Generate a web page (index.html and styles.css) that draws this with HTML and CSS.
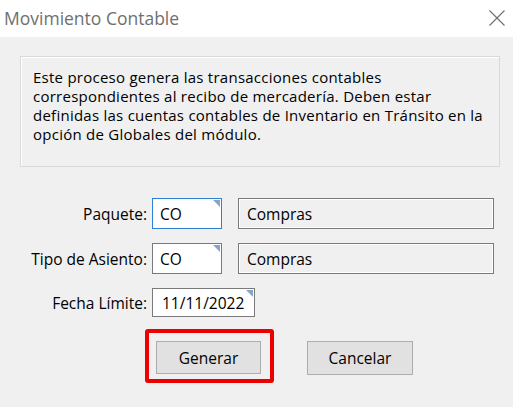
FILE: index.html
```html
<!DOCTYPE html>
<html lang="es">
<head>
<meta charset="utf-8">
<title>Movimiento Contable</title>
<link rel="stylesheet" href="styles.css">
</head>
<body>
<div class="window">
  <div class="titlebar">
    <span class="title">Movimiento Contable</span>
    <svg class="close" width="16" height="16" viewBox="0 0 16 16"><path d="M0.5 0.5 L15.5 15.5 M15.5 0.5 L0.5 15.5" stroke="#6e6e6e" stroke-width="1.1" fill="none"/></svg>
  </div>
  <div class="content">
    <div class="info">Este proceso genera las transacciones contables<br>correspondientes al recibo de mercadería. Deben estar<br>definidas las cuentas contables de Inventario en Tránsito en la<br>opción de Globales del módulo.</div>
    <div class="form">
      <label class="lbl">Paquete:</label>
      <div class="inp focus">CO<span class="corner"></span></div>
      <div class="desc">Compras</div>
      <label class="lbl">Tipo de Asiento:</label>
      <div class="inp">CO<span class="corner"></span></div>
      <div class="desc">Compras</div>
      <label class="lbl">Fecha Límite:</label>
      <div class="inp date">11/11/2022<span class="corner"></span></div>
      <div></div>
    </div>
    <div class="buttons">
      <div class="highlight"><button class="btn">Generar</button></div>
      <button class="btn cancel">Cancelar</button>
    </div>
  </div>
</div>
</body>
</html>
```

FILE: styles.css
```css
html, body {
  margin: 0;
  padding: 0;
  background: #f0f0f0;
}
body {
  font-family: "Open Sans", "Noto Sans", sans-serif;
  font-size: 15.5px;
  color: #000;
  width: 513px;
  height: 407px;
  overflow: hidden;
}
.titlebar {
  height: 37px;
  background: #fff;
  display: flex;
  align-items: center;
  justify-content: space-between;
  padding: 0 8px 0 4px;
  box-sizing: border-box;
}
.title {
  font-size: 17.5px;
  color: #6f6f6f;
  margin-top: -1px;
}
.close {
  margin-top: -2px;
}
.content {
  padding: 19px 13px 0 20px;
}
.info {
  border: 1px solid #d9d9d9;
  box-shadow: inset 1px 1px 0 #fff;
  padding-left: 12px;
  padding-top: 11px;
  box-sizing: border-box;
  width: 480px;
  height: 111px;
  line-height: 19px;
  font-size: 15px;
  letter-spacing: 0.25px;
}
.form {
  display: grid;
  grid-template-columns: 127px 70px 267px;
  column-gap: 5px;
  row-gap: 14px;
  margin-top: 31px;
  align-items: center;
}
.form .desc {
  margin-left: 11px;
}
.lbl {
  text-align: right;
}
.inp {
  position: relative;
  height: 31px;
  box-sizing: border-box;
  border: 1px solid #7a7a7a;
  background: #fff;
  padding-left: 7px;
  display: flex;
  align-items: center;
}
.inp.focus {
  border-color: #2f80d0;
}
.inp.date {
  width: 103px;
  height: 29px;
  padding-left: 9px;
}
.corner {
  position: absolute;
  top: 1px;
  right: 1px;
  width: 0;
  height: 0;
  border-top: 7px solid #8aa4c6;
  border-left: 7px solid transparent;
}
.desc {
  height: 31px;
  box-sizing: border-box;
  border: 1px solid #7a7a7a;
  box-shadow: inset 1px 1px 0 #fff, inset -1px -1px 0 #fff;
  background: #f0f0f0;
  padding-left: 8px;
  display: flex;
  align-items: center;
}
.buttons {
  display: flex;
  align-items: flex-start;
  margin-top: 12px;
  margin-left: 125px;
}
.highlight {
  border: 4px solid #ee0000;
  border-radius: 3px;
  padding: 8px 9px 5px 7px;
}
.btn {
  font-family: inherit;
  font-size: 15.5px;
  width: 105px;
  height: 33px;
  background: #e1e1e1;
  border: 1px solid #adadad;
  color: #000;
  padding: 0;
  margin: 0;
}
.btn.cancel {
  width: 106px;
  height: 34px;
  margin-left: 33px;
  margin-top: 12px;
}
```
